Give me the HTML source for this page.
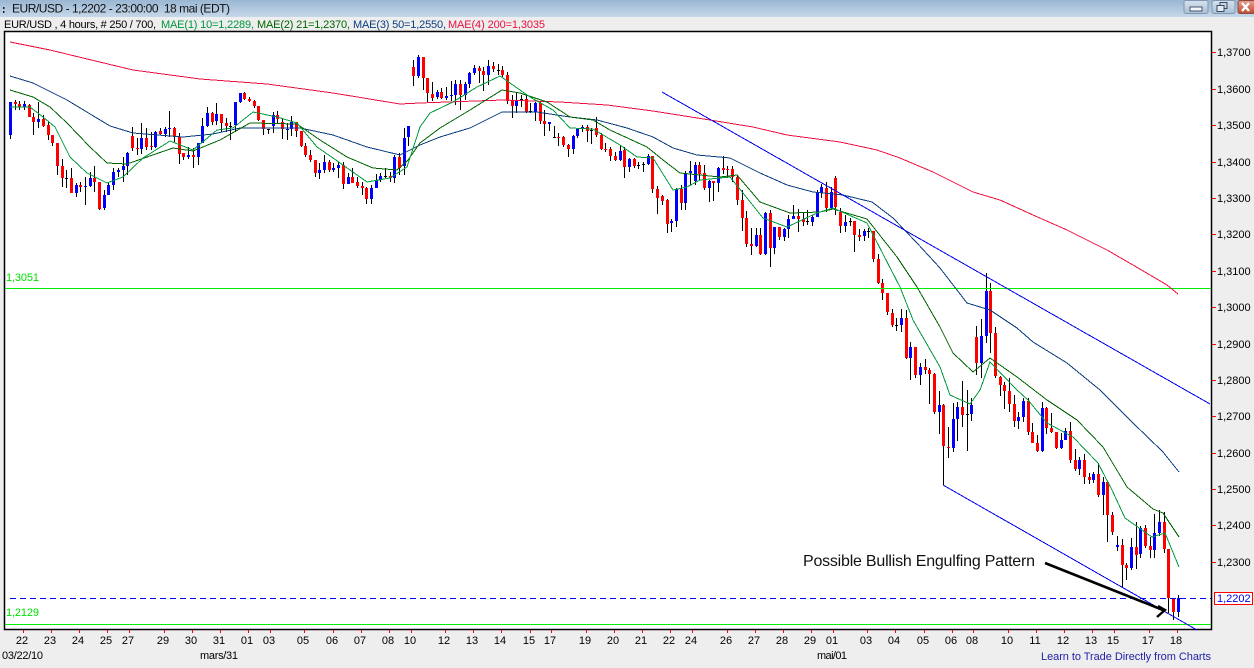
<!DOCTYPE html>
<html><head><meta charset="utf-8"><title>EUR/USD</title>
<style>
html,body{margin:0;padding:0;background:#eeeeee;width:1254px;height:668px;overflow:hidden}
svg{display:block;position:absolute;left:0;top:0}
text{font-family:"Liberation Sans",Arial,sans-serif}
</style></head><body>
<svg width="1254" height="668" viewBox="0 0 1254 668" xmlns="http://www.w3.org/2000/svg">
<defs><linearGradient id="tb" x1="0" y1="0" x2="0" y2="1"><stop offset="0" stop-color="#9ab6d2"/><stop offset="1" stop-color="#c6d8ea"/></linearGradient>
<linearGradient id="bt" x1="0" y1="0" x2="0" y2="1"><stop offset="0" stop-color="#d6e2ee"/><stop offset="1" stop-color="#a9c0d8"/></linearGradient>
<linearGradient id="cl" x1="0" y1="0" x2="0" y2="1"><stop offset="0" stop-color="#e8a090"/><stop offset="1" stop-color="#c04a30"/></linearGradient></defs>
<rect width="1254" height="668" fill="#eeeeee"/>
<rect width="1254" height="17" fill="url(#tb)"/>
<rect x="3" y="7" width="1.5" height="2" fill="#222"/><rect x="3" y="11" width="1.5" height="2" fill="#222"/>
<text x="12" y="12.5" font-size="12" fill="#111" textLength="218" xml:space="preserve">EUR/USD - 1,2202 - 23:00:00  18 mai (EDT)</text>
<rect x="1184" y="0.5" width="24" height="13" rx="2" fill="url(#bt)" stroke="#7f97b0"/>
<rect x="1190" y="7" width="12" height="4" fill="#f4f6f8" stroke="#46566a" stroke-width="1"/>
<rect x="1212" y="0.5" width="23" height="13" rx="2" fill="url(#bt)" stroke="#7f97b0"/>
<rect x="1220" y="2.5" width="7" height="6" fill="none" stroke="#3a4a5c"/><rect x="1217" y="5.5" width="7" height="6" fill="#e4ecf4" stroke="#3a4a5c"/>
<rect x="1238" y="0.5" width="17" height="13" rx="2" fill="url(#cl)" stroke="#8a4a3c"/>
<path d="M1242 3l7 8M1249 3l-7 8" stroke="#fff" stroke-width="2.4"/>
<text x="4" y="28" font-size="11" fill="#000" textLength="152" xml:space="preserve">EUR/USD , 4 hours, # 250 / 700,</text>
<text x="161" y="28" font-size="11" fill="#00963c" textLength="93">MAE(1) 10=1,2289,</text>
<text x="257" y="28" font-size="11" fill="#006400" textLength="93">MAE(2) 21=1,2370,</text>
<text x="353" y="28" font-size="11" fill="#0a3d80" textLength="93">MAE(3) 50=1,2550,</text>
<text x="448" y="28" font-size="11" fill="#e8103c" textLength="97">MAE(4) 200=1,3035</text>
<rect x="4.5" y="31.5" width="1207" height="598" fill="#fff" stroke="#000" stroke-width="1.5"/>
<g shape-rendering="crispEdges">
<path stroke="#000" fill="none" d="M10.5 102V139M15.5 100V110M19.5 101V110M24.5 101V110M29.5 104V117M33.5 113V135M38.5 102V128M43.5 115V127M48.5 122V140M52.5 135V146M57.5 143V175M62.5 159V187M66.5 170V188M65 178.5h3M71.5 168V193M76.5 183V197M80.5 182V192M85.5 177V205M90.5 172V187M94.5 166V192M99.5 182V210M104.5 190V210M108.5 182V195M113.5 168V190M118.5 168V177M123.5 157V182M127.5 152V175M132.5 127V151M137.5 138V155M141.5 123V154M146.5 128V150M151.5 132V150M155.5 131V148M160.5 128V135M165.5 127V137M169.5 111V137M174.5 127V142M179.5 133V164M183.5 153V160M188.5 147V159M193.5 148V168M198.5 143V165M202.5 118V143M207.5 107V127M212.5 112V125M216.5 103V125M221.5 114V132M226.5 118V132M230.5 122V140M229 126.5h3M235.5 102V132M240.5 93V103M244.5 92V100M249.5 97V102M254.5 100V108M258.5 106V121M263.5 120V135M268.5 129V134M267 129.5h3M273.5 112V133M277.5 111V123M282.5 118V139M287.5 123V140M291.5 116V136M296.5 122V137M301.5 131V147M305.5 143V157M310.5 150V162M315.5 160V177M319.5 163V179M324.5 155V173M329.5 160V172M333.5 163V172M338.5 162V178M343.5 162V189M348.5 173V184M352.5 168V183M357.5 177V188M362.5 182V195M366.5 187V204M371.5 185V204M376.5 174V188M380.5 173V182M385.5 168V178M384 176.5h3M390.5 172V182M394.5 155V183M399.5 153V175M404.5 128V175M408.5 126V146M413.5 60V86M418.5 55V78M423.5 57V90M427.5 78V102M432.5 82V101M437.5 90V99M441.5 88V99M446.5 87V100M451.5 81V101M455.5 80V105M460.5 80V110M465.5 82V100M469.5 72V88M474.5 65V75M479.5 66V83M483.5 67V91M488.5 60V85M493.5 62V72M498.5 64V75M497 70.5h3M502.5 66V77M507.5 72V104M512.5 95V118M516.5 93V113M521.5 95V107M520 99.5h3M526.5 95V113M530.5 103V113M529 111.5h3M535.5 102V121M540.5 102V124M544.5 110V136M549.5 122V131M554.5 126V138M553 137.5h3M558.5 133V146M563.5 136V147M568.5 144V157M573.5 135V154M577.5 128V138M582.5 125V132M587.5 125V142M591.5 128V144M590 130.5h3M596.5 117V137M601.5 133V150M605.5 143V152M610.5 147V161M615.5 152V161M620.5 145V161M624.5 147V178M629.5 158V172M634.5 158V168M638.5 162V169M637 165.5h3M643.5 162V172M642 164.5h3M648.5 154V165M652.5 156V193M657.5 186V214M662.5 195V205M667.5 199V233M671.5 219V232M676.5 188V227M681.5 185V210M685.5 171V210M690.5 161V185M695.5 162V185M699.5 162V180M704.5 165V190M709.5 180V202M713.5 182V201M718.5 167V192M723.5 156V174M727.5 166V178M732.5 166V182M737.5 175V205M742.5 190V231M746.5 211V247M751.5 228V255M756.5 228V247M760.5 228V255M765.5 212V255M770.5 210V267M774.5 227V254M779.5 227V240M784.5 228V241M788.5 215V238M793.5 205V219M798.5 209V232M803.5 213V226M807.5 210V225M806 221.5h3M812.5 215V226M817.5 190V217M821.5 184V198M826.5 182V212M831.5 187V208M835.5 176V215M840.5 208V233M845.5 215V232M850.5 218V226M849 221.5h3M854.5 221V252M859.5 229V241M864.5 229V241M868.5 228V238M867 231.5h3M873.5 231V262M878.5 254V284M882.5 279V300M887.5 293V315M892.5 309V327M896.5 318V331M895 325.5h3M901.5 309V332M906.5 310V359M910.5 342V380M915.5 347V378M920.5 363V385M925.5 359V374M929.5 368V404M934.5 373V414M939.5 391V434M943.5 404V485M948.5 427V458M953.5 403V452M957.5 402V441M962.5 381V427M967.5 390V451M966 414.5h3M971.5 398V421M976.5 326V375M981.5 319V378M986.5 273V343M990.5 283V353M995.5 327V378M1000.5 376V396M1004.5 382V409M1009.5 378V412M1014.5 395V427M1018.5 412V429M1023.5 398V422M1028.5 398V435M1032.5 423V443M1037.5 435V452M1042.5 402V452M1046.5 407V434M1051.5 413V433M1056.5 432V449M1061.5 433V449M1065.5 428V440M1070.5 422V463M1075.5 449V471M1079.5 457V475M1084.5 454V484M1089.5 473V484M1093.5 472V483M1098.5 463V497M1103.5 477V515M1107.5 482V542M1112.5 512V535M1117.5 536V551M1122.5 539V587M1126.5 563V580M1131.5 538V570M1136.5 522V569M1140.5 526V558M1145.5 525V548M1150.5 537V558M1154.5 514V558M1159.5 510V536M1164.5 512V553M1168.5 549V613M1173.5 598V620M1178.5 595V617"/>
<path fill="#ff0000" d="M14 102h3V104h-3zM18 104h3V107h-3zM28 105h3V117h-3zM32 117h3V122h-3zM42 119h3V126h-3zM47 125h3V135h-3zM51 135h3V143h-3zM56 143h3V166h-3zM61 166h3V178h-3zM70 178h3V193h-3zM79 185h3V187h-3zM93 178h3V182h-3zM98 182h3V209h-3zM131 136h3V148h-3zM136 148h3V149h-3zM145 138h3V147h-3zM150 146h3V147h-3zM159 131h3V134h-3zM173 128h3V137h-3zM178 137h3V154h-3zM182 153h3V157h-3zM192 155h3V157h-3zM211 113h3V122h-3zM220 114h3V123h-3zM225 123h3V126h-3zM243 93h3V99h-3zM248 99h3V101h-3zM253 101h3V106h-3zM257 106h3V120h-3zM262 120h3V129h-3zM276 115h3V119h-3zM281 122h3V129h-3zM295 122h3V131h-3zM300 131h3V146h-3zM304 146h3V155h-3zM309 155h3V160h-3zM314 160h3V173h-3zM328 162h3V170h-3zM342 165h3V184h-3zM351 177h3V183h-3zM356 182h3V186h-3zM361 186h3V188h-3zM365 188h3V199h-3zM389 176h3V178h-3zM398 157h3V168h-3zM412 67h3V76h-3zM422 57h3V78h-3zM426 78h3V93h-3zM431 94h3V98h-3zM440 92h3V98h-3zM459 84h3V95h-3zM478 68h3V71h-3zM482 71h3V75h-3zM492 66h3V69h-3zM501 70h3V75h-3zM506 75h3V101h-3zM511 101h3V106h-3zM525 99h3V112h-3zM539 103h3V121h-3zM543 121h3V124h-3zM557 137h3V138h-3zM562 137h3V145h-3zM567 145h3V149h-3zM586 127h3V131h-3zM595 128h3V135h-3zM600 135h3V149h-3zM604 149h3V150h-3zM609 149h3V156h-3zM614 156h3V160h-3zM623 150h3V167h-3zM633 159h3V166h-3zM651 156h3V189h-3zM656 189h3V198h-3zM661 196h3V201h-3zM666 200h3V224h-3zM680 189h3V203h-3zM698 165h3V174h-3zM703 173h3V188h-3zM712 181h3V183h-3zM722 168h3V170h-3zM726 169h3V170h-3zM731 169h3V177h-3zM736 177h3V200h-3zM741 200h3V218h-3zM745 218h3V244h-3zM750 244h3V246h-3zM759 235h3V254h-3zM769 213h3V248h-3zM778 227h3V237h-3zM797 216h3V219h-3zM802 219h3V222h-3zM825 188h3V208h-3zM834 178h3V207h-3zM839 212h3V226h-3zM853 221h3V235h-3zM858 235h3V237h-3zM872 231h3V259h-3zM877 259h3V283h-3zM881 283h3V293h-3zM886 293h3V312h-3zM891 313h3V325h-3zM905 318h3V358h-3zM914 347h3V375h-3zM924 367h3V370h-3zM928 370h3V374h-3zM933 374h3V412h-3zM942 405h3V446h-3zM947 447h3V448h-3zM961 407h3V415h-3zM975 337h3V363h-3zM989 291h3V333h-3zM994 333h3V376h-3zM999 377h3V385h-3zM1003 385h3V391h-3zM1008 391h3V404h-3zM1013 404h3V421h-3zM1027 401h3V432h-3zM1031 432h3V443h-3zM1036 443h3V451h-3zM1045 408h3V428h-3zM1050 428h3V432h-3zM1055 432h3V448h-3zM1069 431h3V460h-3zM1074 460h3V469h-3zM1083 460h3V477h-3zM1088 477h3V480h-3zM1097 474h3V495h-3zM1106 482h3V515h-3zM1111 515h3V532h-3zM1121 545h3V565h-3zM1125 565h3V568h-3zM1135 547h3V555h-3zM1144 528h3V546h-3zM1149 546h3V550h-3zM1163 522h3V549h-3zM1167 549h3V598h-3zM1172 598h3V612h-3z"/>
<path fill="#0000ff" d="M9 102h3V135h-3zM23 104h3V107h-3zM37 119h3V122h-3zM75 185h3V193h-3zM84 186h3V187h-3zM89 178h3V186h-3zM103 195h3V208h-3zM107 185h3V195h-3zM112 172h3V185h-3zM117 170h3V172h-3zM122 166h3V170h-3zM126 153h3V166h-3zM140 138h3V149h-3zM154 132h3V147h-3zM164 129h3V134h-3zM168 128h3V129h-3zM187 155h3V157h-3zM197 143h3V157h-3zM201 126h3V143h-3zM206 113h3V126h-3zM215 114h3V121h-3zM234 102h3V125h-3zM239 93h3V102h-3zM272 115h3V126h-3zM286 129h3V130h-3zM290 122h3V129h-3zM318 170h3V173h-3zM323 162h3V170h-3zM332 168h3V170h-3zM337 165h3V168h-3zM347 177h3V184h-3zM370 188h3V199h-3zM375 180h3V188h-3zM379 176h3V180h-3zM393 157h3V178h-3zM403 138h3V166h-3zM407 126h3V137h-3zM417 57h3V76h-3zM436 92h3V97h-3zM445 96h3V98h-3zM450 95h3V96h-3zM454 84h3V95h-3zM464 84h3V95h-3zM468 73h3V84h-3zM473 68h3V73h-3zM487 66h3V75h-3zM515 101h3V106h-3zM534 103h3V112h-3zM548 122h3V124h-3zM572 136h3V149h-3zM576 129h3V136h-3zM581 127h3V129h-3zM619 151h3V160h-3zM628 159h3V167h-3zM647 156h3V164h-3zM670 221h3V223h-3zM675 189h3V221h-3zM684 173h3V203h-3zM689 171h3V173h-3zM694 165h3V181h-3zM708 181h3V188h-3zM717 168h3V183h-3zM755 235h3V246h-3zM764 213h3V254h-3zM773 227h3V248h-3zM783 229h3V237h-3zM787 219h3V229h-3zM792 216h3V219h-3zM811 217h3V222h-3zM816 192h3V217h-3zM820 187h3V193h-3zM830 192h3V208h-3zM844 222h3V226h-3zM863 231h3V236h-3zM900 318h3V325h-3zM909 347h3V358h-3zM919 367h3V375h-3zM938 405h3V412h-3zM952 419h3V448h-3zM956 407h3V419h-3zM970 405h3V414h-3zM980 336h3V363h-3zM985 291h3V336h-3zM1017 417h3V421h-3zM1022 401h3V417h-3zM1041 408h3V451h-3zM1060 440h3V448h-3zM1064 431h3V440h-3zM1078 460h3V469h-3zM1092 474h3V480h-3zM1102 482h3V495h-3zM1116 545h3V547h-3zM1130 547h3V568h-3zM1139 528h3V554h-3zM1153 533h3V550h-3zM1158 522h3V533h-3zM1177 598h3V612h-3z"/>
<path stroke="#00ee00" stroke-width="1" d="M5 288.5H1211M5 624.5H1211"/>
<path stroke="#0000ee" stroke-width="1" stroke-dasharray="6 4" d="M10 598.5H1211"/>
</g>
<g fill="none" stroke-width="1" shape-rendering="crispEdges">
<polyline stroke="#ee1040" points="10,42 50,50 83,58 133,70 200,79 267,84 333,93 400,104 420,103 503,100 560,102 607,105 653,111 710,120 753,127 787,135 840,142 877,150 900,158 933,172 973,192 1000,200 1033,215 1067,230 1107,250 1133,265 1167,285 1178,294"/>
<polyline stroke="#0a3d80" points="10,76 33,83 67,100 110,126 133,133 183,137 213,134 240,128 267,128 300,128 333,135 367,147 400,155 420,145 440,137 470,128 502,112 537,112 570,117 597,120 627,128 653,137 673,148 697,155 730,158 760,173 787,185 813,192 843,195 872,202 893,218 917,243 940,268 967,303 990,310 1017,328 1033,342 1067,363 1100,390 1133,423 1163,452 1179,472"/>
<polyline stroke="#006400" points="10,90 33,97 50,107 67,123 90,147 107,163 127,164 147,157 173,148 193,151 220,140 250,123 297,124 320,140 347,157 373,168 397,170 408,160 420,143 440,128 470,110 502,90 520,93 547,102 570,117 593,120 610,130 647,147 663,160 680,173 720,177 737,175 760,202 790,213 820,212 833,209 867,219 897,257 917,287 940,327 953,353 973,372 990,358 1017,377 1047,400 1077,420 1103,447 1127,487 1153,509 1163,513 1179,537"/>
<polyline stroke="#009a3c" points="10,107 30,107 43,117 55,127 70,157 87,173 107,183 123,177 143,158 170,141 193,150 217,130 233,128 253,112 277,117 297,123 317,147 333,158 367,182 390,178 407,167 420,127 430,113 453,102 477,87 500,76 530,97 553,110 570,128 593,129 620,145 637,157 653,158 673,190 687,187 700,180 730,177 743,193 763,218 787,227 817,213 833,208 867,223 900,287 913,320 940,367 950,395 970,404 980,390 990,362 1017,390 1028,400 1047,423 1073,437 1098,463 1112,490 1125,518 1152,537 1165,533 1179,567"/>
<path stroke="#0000ee" d="M662 92L1210 404M943 485L1197 630"/>
</g>
<path d="M1045 563L1163 610" stroke="#000" stroke-width="2.6" fill="none"/>
<path d="M1158 606L1165 610L1157 617" stroke="#000" stroke-width="2.4" fill="none"/>
<text x="803" y="566" font-size="16" fill="#111" textLength="232">Possible Bullish Engulfing Pattern</text>
<text x="6" y="281" font-size="11" fill="#00e000" textLength="33">1,3051</text>
<text x="6" y="616" font-size="11" fill="#00e000" textLength="33">1,2129</text>
<path shape-rendering="crispEdges" stroke="#ff0000" d="M1212 52.5h4M1212 89.5h4M1212 125.5h4M1212 162.5h4M1212 198.5h4M1212 234.5h4M1212 271.5h4M1212 307.5h4M1212 344.5h4M1212 380.5h4M1212 416.5h4M1212 453.5h4M1212 489.5h4M1212 525.5h4M1212 562.5h4M23.5 630v3M51.5 630v3M79.5 630v3M107.5 630v3M129.5 630v3M164.5 630v3M192.5 630v3M220.5 630v3M248.5 630v3M270.5 630v3M304.5 630v3M333.5 630v3M361.5 630v3M389.5 630v3M411.5 630v3M445.5 630v3M473.5 630v3M501.5 630v3M530.5 630v3M551.5 630v3M586.5 630v3M614.5 630v3M642.5 630v3M670.5 630v3M692.5 630v3M727.5 630v3M755.5 630v3M783.5 630v3M811.5 630v3M833.5 630v3M867.5 630v3M895.5 630v3M924.5 630v3M952.5 630v3M973.5 630v3M1008.5 630v3M1036.5 630v3M1064.5 630v3M1092.5 630v3M1114.5 630v3M1149.5 630v3M1177.5 630v3"/>
<g font-size="11" fill="#000">
<text x="1217" y="56">1,3700</text><text x="1217" y="93">1,3600</text><text x="1217" y="129">1,3500</text><text x="1217" y="166">1,3400</text><text x="1217" y="202">1,3300</text><text x="1217" y="238">1,3200</text><text x="1217" y="275">1,3100</text><text x="1217" y="311">1,3000</text><text x="1217" y="348">1,2900</text><text x="1217" y="384">1,2800</text><text x="1217" y="420">1,2700</text><text x="1217" y="457">1,2600</text><text x="1217" y="493">1,2500</text><text x="1217" y="529">1,2400</text><text x="1217" y="566">1,2300</text>
</g>
<rect x="1214.5" y="592.5" width="38" height="12" fill="#fff" stroke="#ff0000"/>
<text x="1217" y="602" font-size="11" fill="#0000ee">1,2202</text>
<g font-size="11" fill="#000" text-anchor="middle">
<text x="22" y="644">22</text><text x="50" y="644">23</text><text x="78" y="644">24</text><text x="106" y="644">25</text><text x="128" y="644">27</text><text x="163" y="644">29</text><text x="191" y="644">30</text><text x="219" y="644">31</text><text x="247" y="644">01</text><text x="269" y="644">03</text><text x="303" y="644">05</text><text x="332" y="644">06</text><text x="360" y="644">07</text><text x="388" y="644">08</text><text x="410" y="644">10</text><text x="444" y="644">12</text><text x="472" y="644">13</text><text x="500" y="644">14</text><text x="529" y="644">15</text><text x="550" y="644">17</text><text x="585" y="644">19</text><text x="613" y="644">20</text><text x="641" y="644">21</text><text x="669" y="644">22</text><text x="691" y="644">24</text><text x="726" y="644">26</text><text x="754" y="644">27</text><text x="782" y="644">28</text><text x="810" y="644">29</text><text x="832" y="644">01</text><text x="866" y="644">03</text><text x="894" y="644">04</text><text x="923" y="644">05</text><text x="951" y="644">06</text><text x="972" y="644">08</text><text x="1007" y="644">10</text><text x="1035" y="644">11</text><text x="1063" y="644">12</text><text x="1091" y="644">13</text><text x="1113" y="644">15</text><text x="1148" y="644">17</text><text x="1176" y="644">18</text>
</g>
<text x="2" y="659" font-size="11" fill="#000" textLength="41">03/22/10</text>
<text x="200" y="659" font-size="11" fill="#000" textLength="38">mars/31</text>
<text x="817" y="659" font-size="11" fill="#000" textLength="30">mai/01</text>
<text x="1041" y="660" font-size="11" fill="#2222aa" textLength="170">Learn to Trade Directly from Charts</text>
</svg>
</body></html>
